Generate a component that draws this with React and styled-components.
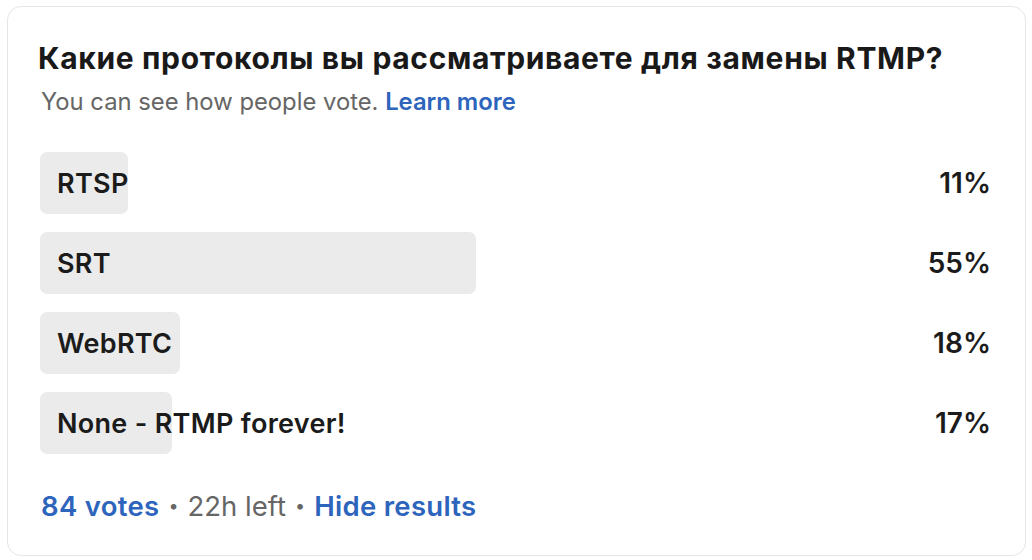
import React from "react";
import styled, { createGlobalStyle } from "styled-components";

const GlobalStyle = createGlobalStyle`
  body {
    margin: 0;
    background: #ffffff;
    font-family: Inter, "Noto Sans", sans-serif;
    -webkit-font-smoothing: antialiased;
  }
`;

const Card = styled.div`
  box-sizing: border-box;
  width: 1019px;
  height: 550px;
  margin: 6px 0 0 7px;
  border: 1px solid #e6e6e6;
  border-radius: 14px;
  padding: 33px 33px 0 32px;
  color: #1b1b1b;
`;

const Title = styled.h2`
  margin: 0 0 0 -2px;
  font-size: 30px;
  font-weight: 700;
  line-height: 36px;
  letter-spacing: 0.65px;
  color: #191919;
  white-space: nowrap;
`;

const Subtitle = styled.p`
  margin: 11px 0 0 1px;
  font-size: 23.8px;
  line-height: 30px;
  color: #666666;
`;

const Link = styled.a`
  color: #2d64bc;
  font-weight: 600;
  text-decoration: none;
`;

const Options = styled.div`
  display: flex;
  flex-direction: column;
  gap: 18px;
  margin-top: 35px;
`;

const Row = styled.div`
  display: flex;
  align-items: center;
  height: 62px;
`;

const Track = styled.div`
  position: relative;
  width: 793px;
  height: 100%;
  display: flex;
  align-items: center;
`;

const Fill = styled.div`
  position: absolute;
  left: 0;
  top: 0;
  bottom: 0;
  background: #ebebeb;
  border-radius: 7px;
`;

const Label = styled.span`
  position: relative;
  padding-left: 17px;
  font-size: 27px;
  font-weight: 600;
  letter-spacing: 0.3px;
  color: #1b1b1b;
  white-space: nowrap;
`;

const Percent = styled.span`
  flex: 1;
  text-align: right;
  font-size: 28px;
  font-weight: 600;
  color: #1b1b1b;
  padding-right: 1px;
`;

const Footer = styled.div`
  display: flex;
  align-items: center;
  gap: 9px;
  margin-top: 35px;
  margin-left: 1px;
  font-size: 27.5px;
  line-height: 34px;
  color: #666666;
`;

const FooterLink = styled.a`
  color: #2d64bc;
  font-weight: 600;
  letter-spacing: 0.3px;
  text-decoration: none;
`;

const Dot = styled.span`
  font-size: 18px;
  color: #666666;
`;

const options = [
  { name: "RTSP", pct: 11, width: 88 },
  { name: "SRT", pct: 55, width: 436 },
  { name: "WebRTC", pct: 18, width: 140 },
  { name: "None - RTMP forever!", pct: 17, width: 132 },
];

export default function App() {
  return (
    <>
      <GlobalStyle />
      <Card>
        <Title>Какие протоколы вы рассматриваете для замены RTMP?</Title>
        <Subtitle>
          You can see how people vote. <Link href="#">Learn more</Link>
        </Subtitle>
        <Options>
          {options.map((o) => (
            <Row key={o.name}>
              <Track>
                <Fill style={{ width: o.width }} />
                <Label>{o.name}</Label>
              </Track>
              <Percent>{o.pct}%</Percent>
            </Row>
          ))}
        </Options>
        <Footer>
          <FooterLink href="#">84 votes</FooterLink>
          <Dot>•</Dot>
          <span>22h left</span>
          <Dot>•</Dot>
          <FooterLink href="#">Hide results</FooterLink>
        </Footer>
      </Card>
    </>
  );
}
